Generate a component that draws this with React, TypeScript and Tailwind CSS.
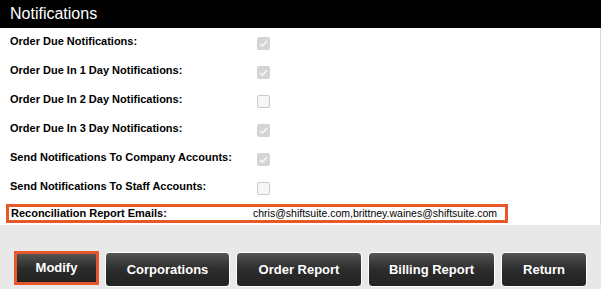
import React from "react";

const rows = [
  { label: "Order Due Notifications:", checked: true },
  { label: "Order Due In 1 Day Notifications:", checked: true },
  { label: "Order Due In 2 Day Notifications:", checked: false },
  { label: "Order Due In 3 Day Notifications:", checked: true },
  { label: "Send Notifications To Company Accounts:", checked: true },
  { label: "Send Notifications To Staff Accounts:", checked: false },
];

const buttons = [
  { label: "Modify", w: "w-[85px]", active: true },
  { label: "Corporations", w: "w-[125px]" },
  { label: "Order Report", w: "w-[126px]" },
  { label: "Billing Report", w: "w-[127px]" },
  { label: "Return", w: "w-[86px]" },
];

const Box = ({ checked }: { checked: boolean }) =>
  checked ? (
    <span className="flex h-[13px] w-[13px] items-center justify-center rounded-[2px] bg-[#d4d4d4]">
      <svg viewBox="0 0 13 13" className="h-[13px] w-[13px]">
        <path d="M3 6.8 L5.4 9.2 L10 4" fill="none" stroke="#f4f4f4" strokeWidth="1.8" />
      </svg>
    </span>
  ) : (
    <span className="block h-[13px] w-[13px] rounded-[2px] border border-[#cbcbcb] bg-[#f6f6f6]" />
  );

const App = () => {
  return (
    <div className="h-[289px] w-[601px] overflow-hidden bg-[#e8e8e8] font-['Liberation_Sans',Arial,sans-serif]">
      <div className="flex h-[28px] items-center bg-black pl-[10px] text-[16px] text-white">
        Notifications
      </div>
      <div className="h-[197px] border-r border-[#d9d9d9] bg-white pt-px">
        {rows.map((r) => (
          <div key={r.label} className="flex h-[29px] items-center">
            <div className="mb-[4px] w-[253px] pl-[10px] text-[11px] font-bold text-black">
              {r.label}
            </div>
            <div className="ml-[4px]">
              <Box checked={r.checked} />
            </div>
          </div>
        ))}
        <div className="ml-[6px] mt-px flex h-[19px] w-[502px] items-center border-[3px] border-[#e8572a]">
          <div className="w-[244px] pl-[2px] text-[11px] font-bold text-black">
            Reconciliation Report Emails:
          </div>
          <div className="text-[10.5px] text-black">
            chris@shiftsuite.com,brittney.waines@shiftsuite.com
          </div>
        </div>
      </div>
      <div className="flex items-start gap-[6px] pl-[14px] pt-[26px]">
        {buttons.map((b) => (
          <button
            key={b.label}
            className={`${b.w} flex items-center justify-center rounded-[4px] bg-gradient-to-b from-[#555] via-[#2c2c2c] to-[#222] text-[13px] font-bold text-white ${
              b.active
                ? "h-[34px] rounded-none border-[3px] border-[#e8572a]"
                : "mt-px h-[35px] border border-white"
            }`}
          >
            {b.label}
          </button>
        ))}
      </div>
    </div>
  );
};

export default App;
